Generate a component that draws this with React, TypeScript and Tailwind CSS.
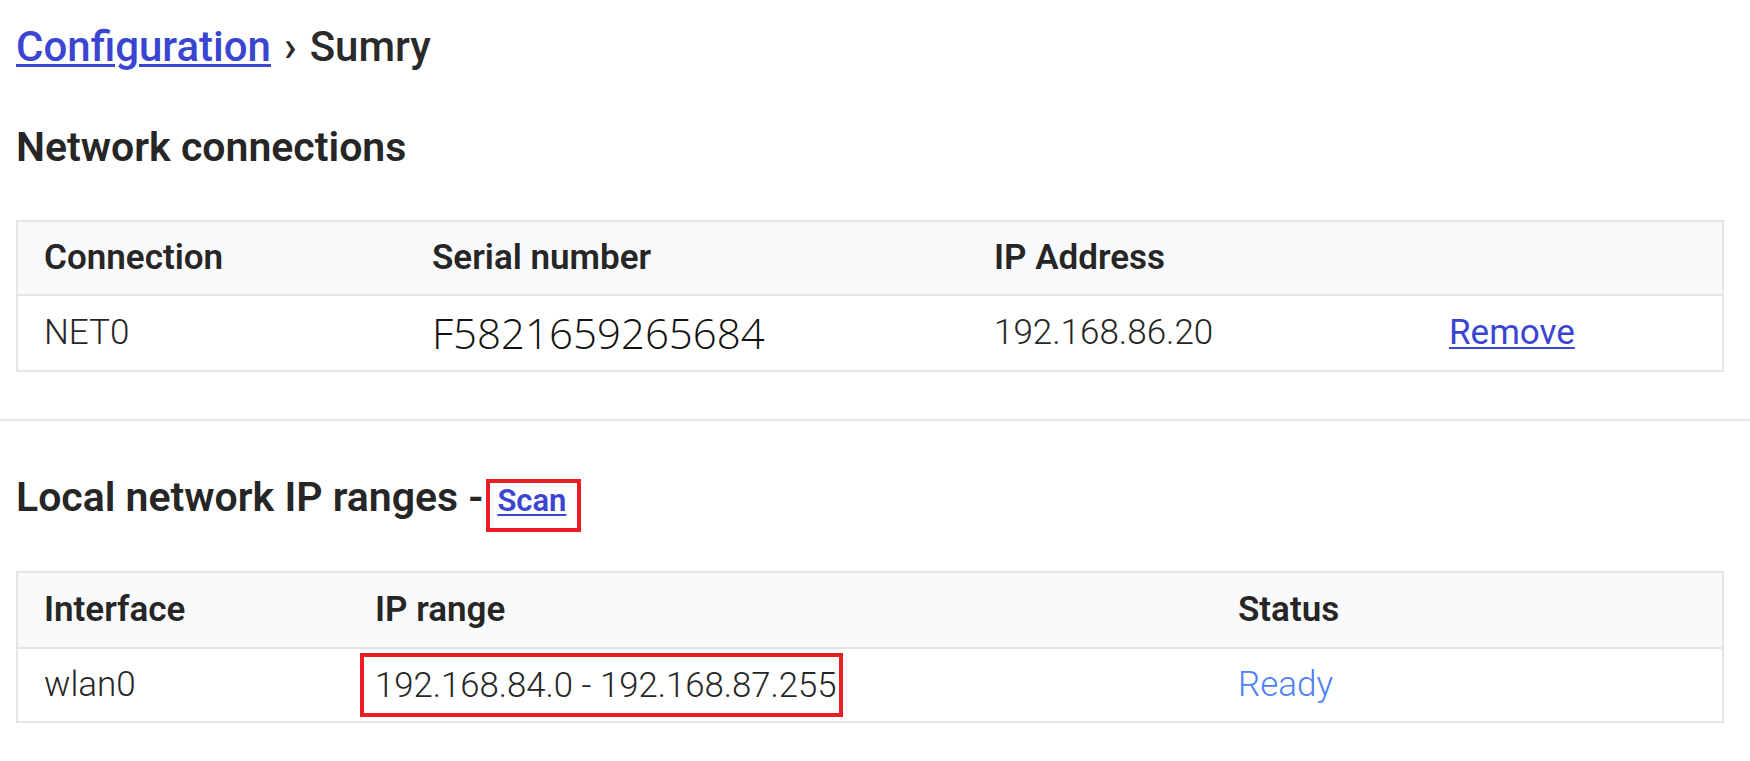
const font = { fontFamily: 'Roboto, "Noto Sans", sans-serif' };

function RedBox({ children, className }: { children: React.ReactNode; className: string }) {
  return (
    <span className="relative inline-block">
      {children}
      <span className={'pointer-events-none absolute border-[4px] border-[#ec1c24] ' + className} />
    </span>
  );
}

export default function App() {
  return (
    <div className="min-h-[761px] bg-white text-[#262626]" style={font}>
      <div className="pl-[16px] pr-[26px] pt-[23px]">
        <div className="flex h-[48px] items-baseline text-[42px] font-medium leading-[48px]">
          <a href="#" className="text-[#3a45d2] underline decoration-[3px] underline-offset-[3px]">
            Configuration
          </a>
          <span className="ml-[13px] text-[#2a2a2a]">›</span>
          <span className="ml-[13px] text-[#2a2a2a]">Sumry</span>
        </div>

        <h2 className="mt-[52px] h-[48px] text-[41px] font-semibold leading-[48px] text-[#262626]">
          Network connections
        </h2>

        <div className="mt-[49px] border-[2px] border-[#e5e5e7]">
          <div className="grid h-[74px] grid-cols-[388px_562px_455px_1fr] items-center border-b-[2px] border-[#e5e5e7] bg-[#f9fafc] text-[35px] font-semibold leading-[42px]">
            <div className="pl-[26px]">Connection</div>
            <div className="pl-[26px]">Serial number</div>
            <div className="pl-[26px]">IP Address</div>
            <div className="pl-[26px]" />
          </div>
          <div className="grid h-[74px] grid-cols-[388px_562px_455px_1fr] items-center text-[35px] font-light leading-[40px]">
            <div className="pl-[26px]">NET0</div>
            <div
              className="pl-[26px] text-[42px] font-light leading-[48px] text-[#111]"
              style={{ fontFamily: '"Open Sans", "Noto Sans", sans-serif' }}
            >
              F5821659265684
            </div>
            <div className="pl-[26px]">192.168.86.20</div>
            <div className="pl-[26px]">
              <a href="#" className="text-[35px] font-normal text-[#3a45d2] underline decoration-[2px] underline-offset-[3px]">
                Remove
              </a>
            </div>
          </div>
        </div>
      </div>

      <div className="mt-[47px] h-[2px] bg-[#e6e6e6]" />

      <div className="pl-[16px] pr-[26px]">
        <h2 className="mt-[52px] flex h-[48px] items-baseline text-[41px] font-semibold leading-[48px] text-[#262626]">
          <span>Local network IP ranges -</span>
          <span className="ml-[3px] inline-block border-[4px] border-[#ec1c24] pb-[9px] pl-[7px] pr-[11px] pt-0 text-[31px] leading-[36px]">
            <a href="#" className="text-[#3a45d2] underline decoration-[2px] underline-offset-[3px]">
              Scan
            </a>
          </span>
        </h2>

        <div className="mt-[50px] border-[2px] border-[#e5e5e7]">
          <div className="grid h-[76px] grid-cols-[331px_863px_1fr] items-center border-b-[2px] border-[#e5e5e7] bg-[#f9fafc] text-[35px] font-semibold leading-[42px]">
            <div className="pl-[26px]">Interface</div>
            <div className="pl-[26px]">IP range</div>
            <div className="pl-[26px]">Status</div>
          </div>
          <div className="grid h-[72px] grid-cols-[331px_863px_1fr] items-center text-[35px] font-light leading-[40px]">
            <div className="pl-[26px]">wlan0</div>
            <div className="pl-[26px]">
              <RedBox className="-left-[15px] -right-[7px] -top-[12px] -bottom-[11px]">
                <span className="text-[34.7px]">192.168.84.0 - 192.168.87.255</span>
              </RedBox>
            </div>
            <div className="pl-[26px] text-[#4f80f7]">Ready</div>
          </div>
        </div>
      </div>
    </div>
  );
}
